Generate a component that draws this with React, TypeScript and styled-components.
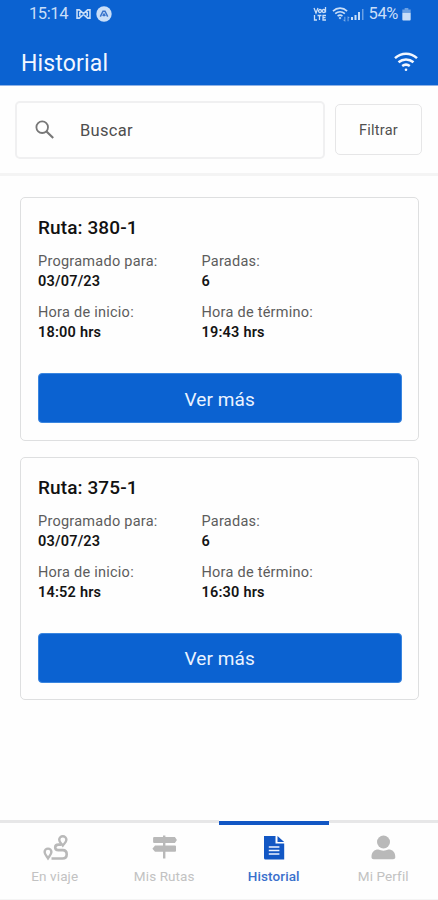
import React from 'react';
import styled, { createGlobalStyle } from 'styled-components';

const BLUE = '#0b62d1';

const GlobalStyle = createGlobalStyle`
  * { box-sizing: border-box; }
  body { margin: 0; background: #fefefe; font-family: Roboto, "Liberation Sans", sans-serif; }
  button { font-family: inherit; }
`;

const Screen = styled.div`
  width: 438px;
  height: 900px;
  display: flex;
  flex-direction: column;
  overflow: hidden;
  background: #fefefe;
`;

const Header = styled.header`
  height: 86px;
  flex: none;
  background: ${BLUE};
  border-bottom: 1px solid #8fb2e6;
`;

const StatusBar = styled.div`
  height: 28px;
  padding: 0 27px 0 29px;
  display: flex;
  align-items: center;
  justify-content: space-between;
  color: #c9def8;
`;

const StatusGroup = styled.div`
  display: flex;
  align-items: center;
`;

const StatusText = styled.span<{ $spacing: number; $before?: number }>`
  font-size: 16.5px;
  line-height: 28px;
  letter-spacing: ${(p) => p.$spacing}px;
  margin-left: ${(p) => p.$before ?? 0}px;
`;

const StatusIcon = styled.svg<{ $before?: number }>`
  display: block;
  flex: none;
  margin-left: ${(p) => p.$before ?? 0}px;
`;

const TitleRow = styled.div`
  height: 57px;
  padding: 0 19px 0 21px;
  display: flex;
  align-items: center;
  justify-content: space-between;
  color: #f2f7ff;
`;

const Title = styled.h1`
  margin: 14px 0 0;
  font-size: 23px;
  line-height: 28px;
  font-weight: 450;
  letter-spacing: 0.15px;
`;

const WifiIcon = styled.svg`
  display: block;
  margin-top: 11px;
`;

const SearchBar = styled.div`
  height: 90px;
  flex: none;
  padding: 15px 16px 0 15px;
  display: flex;
  justify-content: space-between;
  align-items: flex-start;
  border-bottom: 3px solid #f4f4f4;
`;

const SearchField = styled.div`
  width: 310px;
  height: 58px;
  padding: 0 18px;
  display: flex;
  align-items: center;
  gap: 25px;
  border: 2px solid #f0f0f1;
  border-radius: 5px;
  color: #4e4e4e;
`;

const SearchText = styled.span`
  font-size: 16.5px;
  line-height: 20px;
  letter-spacing: 0.3px;
  margin-top: 2px;
`;

const FilterButton = styled.button`
  width: 87px;
  height: 51px;
  margin-top: 3px;
  padding: 2px 0 0;
  border: 1.5px solid #e6e6e7;
  border-radius: 5px;
  background: #fefefe;
  color: #505050;
  font-size: 14.5px;
  letter-spacing: 0.25px;
`;

const RouteList = styled.main`
  flex: 1;
  padding: 21px 19px 0 20px;
  display: flex;
  flex-direction: column;
  gap: 16px;
`;

const Card = styled.article`
  height: 243.5px;
  padding: 19px 16.5px 0 17px;
  border: 1.5px solid #dedfe0;
  border-radius: 5px;
`;

const CardTitle = styled.h2`
  margin: 0;
  font-size: 19px;
  line-height: 22px;
  font-weight: 500;
  color: #111;
  letter-spacing: 0.1px;
`;

const Details = styled.div`
  margin-top: 13px;
  display: grid;
  grid-template-columns: 163.5px 1fr;
  row-gap: 11px;
`;

const Label = styled.div`
  font-size: 14.5px;
  line-height: 20px;
  letter-spacing: 0.25px;
  color: #5c5c5c;
`;

const Value = styled.div`
  font-size: 14.5px;
  line-height: 20px;
  font-weight: 600;
  letter-spacing: 0.2px;
  color: #141414;
`;

const MoreButton = styled.button`
  display: block;
  width: 100%;
  height: 50px;
  margin-top: 30px;
  padding: 2px 0 0;
  border: 1px solid #3a86e0;
  border-radius: 4px;
  background: ${BLUE};
  color: #eaf3ff;
  font-size: 19px;
  letter-spacing: 0.1px;
`;

const TabBar = styled.nav`
  height: 81px;
  flex: none;
  display: grid;
  grid-template-columns: repeat(4, 1fr);
  border-bottom: 1px solid #f4f4f4;
`;

const Tab = styled.div<{ $active?: boolean }>`
  display: flex;
  flex-direction: column;
  align-items: center;
  border-top: ${(p) => (p.$active ? '4px solid #1257c4' : '3px solid #e7e7e8')};
  margin-top: ${(p) => (p.$active ? 2 : 1)}px;
  padding-top: ${(p) => (p.$active ? 7 : 9)}px;
  color: ${(p) => (p.$active ? '#1257c4' : '#b9b9b9')};
`;

const TabIcon = styled.svg`
  display: block;
  width: 28px;
  height: 28px;
  margin-top: 1px;
`;

const TabLabel = styled.span<{ $active?: boolean }>`
  margin-top: 6px;
  font-size: 13.5px;
  line-height: 18px;
  letter-spacing: 0.1px;
  color: ${(p) => (p.$active ? '#3a70cc' : '#c2c2c2')};
  font-weight: ${(p) => (p.$active ? 500 : 400)};
`;

const WifiArcs = ({ width }: { width: number }) => (
  <>
    <path d="M1.500 6.200C8 .2 17 .2 23.500 6.200" strokeWidth={width} />
    <path d="M5 10.300c4.400-3.800 10.600-3.800 15 0" strokeWidth={width} />
    <path d="M8.700 14.100c2.300-1.800 5.300-1.800 7.600 0" strokeWidth={width} />
  </>
);

const routes = [
  { id: '380-1', date: '03/07/23', stops: '6', start: '18:00 hrs', end: '19:43 hrs' },
  { id: '375-1', date: '03/07/23', stops: '6', start: '14:52 hrs', end: '16:30 hrs' },
];

const Field = ({ label, value }: { label: string; value: string }) => (
  <div>
    <Label>{label}</Label>
    <Value>{value}</Value>
  </div>
);

const TripIcon = () => (
  <TabIcon viewBox="0 0 28 28" fill="none" stroke="currentColor" strokeWidth="2.400">
    <path d="M7 25.300c-1.300-2-3.400-4-3.400-6.300a3.400 3.400 0 0 1 6.800 0c0 2.300-2.100 4.300-3.400 6.300z" />
    <path d="M21.800 12.500c-1.300-1.800-3.600-3.400-3.600-5.700a3.600 3.600 0 0 1 7.200 0c0 2.300-2.300 3.900-3.600 5.700z" />
    <path d="M20.500 11.600h-3c-2.200 0-3.300 1.200-3.300 2.800 0 1.700 1.300 2.700 3.200 2.700h4.400c2.400 0 3.900 1.700 3.900 4.200 0 2.600-1.600 4.200-4.200 4.200H10.500" strokeWidth="2.600" />
  </TabIcon>
);

const SignIcon = () => (
  <TabIcon viewBox="0 0 28 28" fill="currentColor">
    <path d="M13 2.500h2.400v1.600h9.500l2 2.900-2 3h-9.500v2.600h9.600a1 1 0 0 1 1 1v4.200a1 1 0 0 1-1 1h-9.600v6.700H13v-6.700H5l-2.600-3.100L5 12.600h8V10H4.100a1 1 0 0 1-1-1V5.100a1 1 0 0 1 1-1H13z" />
  </TabIcon>
);

const DocumentIcon = () => (
  <TabIcon viewBox="0 0 28 28">
    <path fill="currentColor" d="M4 3h11.500v7.500h8.700v16H5.500A1.500 1.500 0 0 1 4 25z" />
    <path fill="currentColor" d="M17.500 3l6.700 6H17.500z" />
    <path stroke="#eef4ff" strokeWidth="1.700" d="M8.800 14h10.600M8.800 17.500h10.600M8.800 21h10.600" />
  </TabIcon>
);

const ProfileIcon = () => (
  <TabIcon viewBox="0 0 28 28" fill="currentColor">
    <circle cx="14.500" cy="9" r="6.500" />
    <path d="M2.500 24.200c0-5.100 2.700-7.600 6.900-7.600 3 1.400 7 1.400 10 0 4.200 0 6.900 2.500 6.900 7.600 0 1.300-.9 2-2.200 2H4.700c-1.300 0-2.200-.7-2.200-2z" />
  </TabIcon>
);

const tabs = [
  { name: 'En viaje', Icon: TripIcon },
  { name: 'Mis Rutas', Icon: SignIcon },
  { name: 'Historial', Icon: DocumentIcon, active: true },
  { name: 'Mi Perfil', Icon: ProfileIcon },
];

export default function App() {
  return (
    <>
      <GlobalStyle />
      <Screen>
        <Header>
          <StatusBar>
            <StatusGroup>
              <StatusText $spacing={-0.4}>15:14</StatusText>
              <StatusIcon $before={8} width="15" height="12" viewBox="0 0 16 13" fill="none" stroke="currentColor" strokeWidth="1.700">
                <path d="M1 2h2.500L8 6l4.500-4H15v9h-2.500L8 7l-4.500 4H1zM4 4v5M12 4v5" />
              </StatusIcon>
              <StatusIcon $before={5} width="16" height="16" viewBox="0 0 16 16">
                <circle cx="8" cy="8" r="7.700" fill="currentColor" />
                <path d="M4.300 10.600L7 5.200h2l2.700 5.400M6.800 10L8 8.200 9.200 10" fill="none" stroke="#3973cb" strokeWidth="1.500" />
              </StatusIcon>
            </StatusGroup>
            <StatusGroup>
              <StatusIcon width="14" height="14" viewBox="0 0 14 14" fill="none" stroke="currentColor" strokeWidth="1.300">
                <path d="M1 1l2 5 2-5M12.500 0v5.500M1.500 8v5H4M4.500 8.500h4M6.500 8.500V13M13 8.500h-3V13h3M10 10.700h2.500" />
                <circle cx="7" cy="4" r="1.500" />
                <circle cx="10.700" cy="4" r="1.500" />
              </StatusIcon>
              <StatusIcon $before={5} width="18" height="15" viewBox="0 0 28 23" fill="none" stroke="currentColor">
                <WifiArcs width={2.6} />
                <circle cx="12.500" cy="17" r="1.300" fill="currentColor" />
                <path d="M20 15v7M17.500 19.500L20 22M25 22v-7l2 2" strokeWidth="1.500" opacity=".6" />
              </StatusIcon>
              <StatusIcon $before={1} width="13" height="13" viewBox="0 0 13 13" fill="currentColor">
                <path d="M0 9h2v3H0zM3.500 7h2v5h-2zM7 4h2v8H7z" />
                <path d="M11 1h1.500v11H11z" opacity=".5" />
              </StatusIcon>
              <StatusText $spacing={-0.4} $before={5}>54%</StatusText>
              <StatusIcon $before={4} width="9" height="13" viewBox="0 0 9 14" fill="currentColor">
                <path d="M2.500 0h4v1.500H9V5H0V1.500h2.500z" opacity=".5" />
                <path d="M0 5h9v7.500a1 1 0 0 1-1 1H1a1 1 0 0 1-1-1z" />
              </StatusIcon>
            </StatusGroup>
          </StatusBar>
          <TitleRow>
            <Title>Historial</Title>
            <WifiIcon width="26" height="20" viewBox="0 0 25 20" fill="none" stroke="currentColor">
              <WifiArcs width={2.5} />
              <circle cx="12.500" cy="17.800" r="1.300" fill="currentColor" stroke="none" />
            </WifiIcon>
          </TitleRow>
        </Header>
        <SearchBar>
          <SearchField>
            <svg width="20" height="20" viewBox="0 0 20 20" fill="none" stroke="#777" strokeWidth="1.800">
              <circle cx="7.200" cy="7.200" r="5.800" />
              <path d="M11.500 11.500l6.700 6.500" strokeWidth="2.200" />
            </svg>
            <SearchText>Buscar</SearchText>
          </SearchField>
          <FilterButton>Filtrar</FilterButton>
        </SearchBar>
        <RouteList>
          {routes.map((r) => (
            <Card key={r.id}>
              <CardTitle>Ruta: {r.id}</CardTitle>
              <Details>
                <Field label="Programado para:" value={r.date} />
                <Field label="Paradas:" value={r.stops} />
                <Field label="Hora de inicio:" value={r.start} />
                <Field label="Hora de término:" value={r.end} />
              </Details>
              <MoreButton>Ver más</MoreButton>
            </Card>
          ))}
        </RouteList>
        <TabBar>
          {tabs.map(({ name, Icon, active }) => (
            <Tab key={name} $active={active}>
              <Icon />
              <TabLabel $active={active}>{name}</TabLabel>
            </Tab>
          ))}
        </TabBar>
      </Screen>
    </>
  );
}
